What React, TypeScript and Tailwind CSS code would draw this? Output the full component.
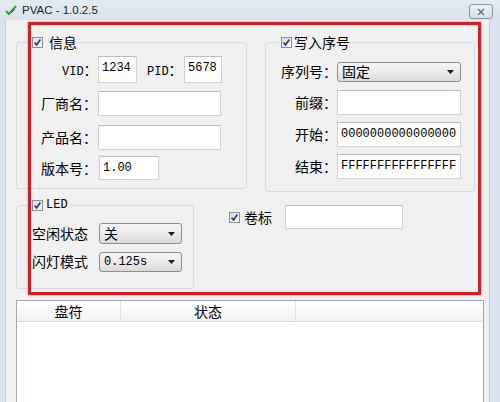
import React from 'react';

const cjk = "font-['Noto_Sans_CJK_SC',sans-serif]";
const mono = "font-['Liberation_Mono','Noto_Sans_CJK_SC',monospace]";

function CheckBox() {
  return (
    <span className="inline-flex h-[11px] w-[11px] shrink-0 items-center justify-center border border-[#8f8f8f] bg-linear-to-br from-[#d8dde6] to-[#f7f8fa]">
      <svg viewBox="0 0 9 9" className="h-[9px] w-[9px]">
        <path d="M1.6 4.6 L3.6 6.8 L7.4 1.6" stroke="#2b3f8c" strokeWidth="1.7" fill="none" />
      </svg>
    </span>
  );
}

function TextBox({ className, children }: { className: string; children?: React.ReactNode }) {
  return (
    <div className={`shrink-0 border border-[#cfd2d8] border-t-[#b9bcc4] bg-white pl-[3px] pt-[4px] text-[12px] leading-[14px] text-black ${mono} ${className}`}>
      {children}
    </div>
  );
}

function Combo({ className, children, fontClass }: { className: string; children: React.ReactNode; fontClass: string }) {
  return (
    <div className={`flex shrink-0 items-center justify-between rounded-[3px] border border-[#8d8d8d] bg-linear-to-b from-[#f5f5f5] via-[#ebebeb] to-[#dadada] pl-[4px] pr-[6px] ${className}`}>
      <span className={`text-black ${fontClass}`}>{children}</span>
      <svg width="7" height="4" viewBox="0 0 7 4">
        <path d="M0 0h7L3.5 4z" fill="#1c1c1c" />
      </svg>
    </div>
  );
}

function Legend({ label, gap, labelClass }: { label: string; gap: string; labelClass: string }) {
  return (
    <legend className="ml-[13px] px-[2px]">
      <span className={`flex h-[16px] items-center ${gap}`}>
        <CheckBox />
        <span className={`leading-[16px] text-black ${labelClass}`}>{label}</span>
      </span>
    </legend>
  );
}

export default function App() {
  return (
    <div className="flex h-[402px] w-[500px] flex-col overflow-hidden bg-[#dae3ee]">
      {/* title bar */}
      <div className="flex h-[20px] shrink-0 items-start bg-linear-to-b from-[#e3eaf2] to-[#d9e3ee]">
        <svg viewBox="0 0 12 12" className="ml-[5px] mt-[4px] h-[12px] w-[12px]">
          <path d="M1 7 L4 10 L11 2" stroke="#3f9a3a" strokeWidth="2" fill="none" />
          <path d="M6 9 L10 5" stroke="#4a4a4a" strokeWidth="1" />
        </svg>
        <span className="ml-[5px] mt-[3px] font-['Liberation_Sans',sans-serif] text-[11.5px] leading-[14px] text-[#222]">
          PVAC - 1.0.2.5
        </span>
        <div className="ml-auto mr-[7px] mt-[4px] flex h-[15px] w-[24px] items-center justify-center rounded-[3px] border border-[#8b97a6] bg-linear-to-b from-[#eef2f7] to-[#d3dce7]">
          <svg viewBox="0 0 10 8" className="h-[8px] w-[10px]">
            <path d="M2 1 L8 7 M8 1 L2 7" stroke="#fff" strokeWidth="3" />
            <path d="M2 1 L8 7 M8 1 L2 7" stroke="#5d6877" strokeWidth="1.5" />
          </svg>
        </div>
      </div>

      {/* body */}
      <div className="flex flex-1 pl-[5px] pr-[10px]">
        <div className={`relative flex flex-1 flex-col border-x border-[#c3cdd8] bg-[#f0f0f0] text-[14px] ${cjk}`}>
          {/* row 1 */}
          <div className="mt-[14px] flex items-start pl-[10px]">
            <fieldset className="w-[231px] rounded-[3px] border border-[#d5dbe1] pb-[8px]">
              <Legend label="信息" gap="gap-[6px]" labelClass={`text-[14px] ${cjk}`} />
              <div className="mt-[6px] flex h-[27px] items-center pl-[45px]">
                <span className="w-[36px] text-black">
                  <span className={`text-[12px] ${mono}`}>VID</span>：
                </span>
                <TextBox className="h-[27px] w-[39px]">1234</TextBox>
                <span className="ml-[10px] w-[37px] text-black">
                  <span className={`text-[12px] ${mono}`}>PID</span>：
                </span>
                <TextBox className="h-[27px] w-[38px]">5678</TextBox>
              </div>
              <div className="mt-[8px] flex items-center pl-[24px]">
                <span className="w-[57px] text-black">厂商名：</span>
                <TextBox className="h-[25px] w-[123px]" />
              </div>
              <div className="mt-[9px] flex items-center pl-[24px]">
                <span className="w-[57px] text-black">产品名：</span>
                <TextBox className="h-[25px] w-[123px]" />
              </div>
              <div className="mt-[6px] flex items-center pl-[24px]">
                <span className="w-[58px] text-black">版本号：</span>
                <TextBox className="h-[24px] w-[60px]">1.00</TextBox>
              </div>
            </fieldset>

            <fieldset className="ml-[18px] w-[210px] rounded-[3px] border border-[#d5dbe1] pb-[12px]">
              <Legend label="写入序号" gap="gap-[2px]" labelClass={`text-[14px] ${cjk}`} />
              <div className="mt-[11px] flex items-center">
                <span className="w-[71px] text-right text-black">序列号：</span>
                <Combo className="h-[20px] w-[124px]" fontClass={`text-[14px] ${cjk}`}>固定</Combo>
              </div>
              <div className="mt-[8px] flex items-center">
                <span className="w-[71px] text-right text-black">前缀：</span>
                <TextBox className="h-[25px] w-[124px]" />
              </div>
              <div className="mt-[7px] flex items-center">
                <span className="w-[71px] text-right text-black">开始：</span>
                <TextBox className="h-[25px] w-[124px]">0000000000000000</TextBox>
              </div>
              <div className="mt-[7px] flex items-center">
                <span className="w-[71px] text-right text-black">结束：</span>
                <TextBox className="h-[25px] w-[124px]">FFFFFFFFFFFFFFFF</TextBox>
              </div>
            </fieldset>
          </div>

          {/* row 2 */}
          <div className="mt-[5px] flex items-start pl-[10px]">
            <fieldset className="w-[178px] rounded-[3px] border border-[#d5dbe1] pb-[16px]">
              <Legend label="LED" gap="gap-[3px]" labelClass={`text-[12px] ${mono}`} />
              <div className="mt-[10px] flex items-center pl-[15px]">
                <span className="w-[67px] text-black">空闲状态</span>
                <Combo className="h-[21px] w-[83px]" fontClass={`text-[14px] ${cjk}`}>关</Combo>
              </div>
              <div className="mt-[7px] flex items-center pl-[15px]">
                <span className="w-[67px] text-black">闪灯模式</span>
                <Combo className="h-[20px] w-[83px]" fontClass={`text-[12px] ${mono}`}>0.125s</Combo>
              </div>
            </fieldset>
            <div className="ml-[35px] mt-[8px] flex items-center">
              <CheckBox />
              <span className="ml-[4px] w-[41px] text-black">卷标</span>
              <TextBox className="h-[24px] w-[118px]" />
            </div>
          </div>

          {/* list */}
          <div className="ml-[10px] mt-[11px] h-[120px] w-[468px] border border-[#a3a8b0] bg-white">
            <div className="flex h-[21px] border-b border-[#d8dadd] bg-linear-to-b from-white to-[#f1f2f4] text-black">
              <div className="flex w-[104px] items-center justify-center border-r border-[#e2e3e6] leading-none">盘符</div>
              <div className="flex w-[175px] items-center justify-center border-r border-[#e2e3e6] leading-none">状态</div>
              <div className="flex-1" />
            </div>
          </div>

          {/* red highlight */}
          <div className="pointer-events-none absolute left-[22px] top-[2px] h-[273px] w-[453px] border-[3px] border-[#d21f27] shadow-[0_0_2px_rgba(120,0,0,0.45)]" />
        </div>
      </div>
    </div>
  );
}
